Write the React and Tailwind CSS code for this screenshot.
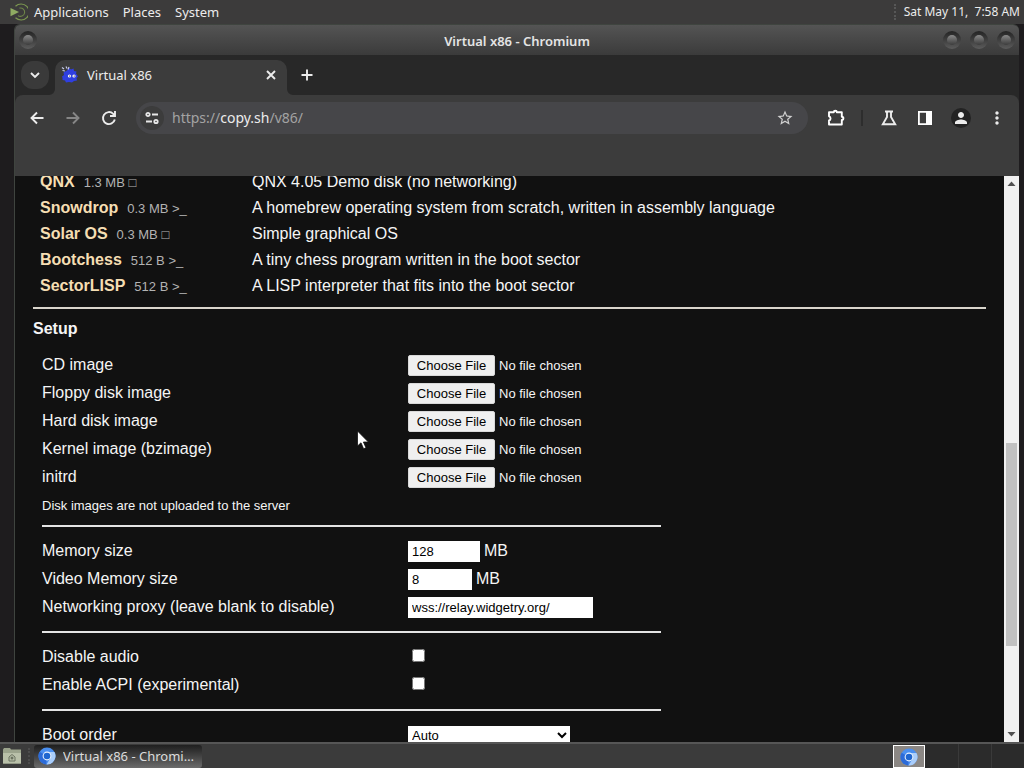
import React from "react";
import { MdMoreVert, MdPerson, MdStarBorder } from "react-icons/md";

const systems = [
  { name: "QNX", size: "1.3 MB", mode: "gui", text: "QNX 4.05 Demo disk (no networking)" },
  {
    name: "Snowdrop",
    size: "0.3 MB",
    mode: "text",
    text: "A homebrew operating system from scratch, written in assembly language",
  },
  { name: "Solar OS", size: "0.3 MB", mode: "gui", text: "Simple graphical OS" },
  { name: "Bootchess", size: "512 B", mode: "text", text: "A tiny chess program written in the boot sector" },
  { name: "SectorLISP", size: "512 B", mode: "text", text: "A LISP interpreter that fits into the boot sector" },
];

const images = [
  { id: "cd", label: "CD image" },
  { id: "floppy", label: "Floppy disk image" },
  { id: "hd", label: "Hard disk image" },
  { id: "kernel", label: "Kernel image (bzimage)" },
  { id: "initrd", label: "initrd" },
];

// Stroked 18px toolbar icons
const icons = {
  back: "M15.500 9H4M9 3.500 3.500 9 9 14.500",
  forward: "M2.500 9H14M9 3.500 14.500 9 9 14.500",
  reload: "M14.800 10.500A6 6 0 1 1 13.200 4.800L14.800 6.500M15 2v5h-5",
  chevron: "M5 7l4 4 4-4",
  close: "M5 5l8 8M13 5l-8 8",
  add: "M9 3.500v11M3.500 9h11",
  flask: "M5 2.500h8M7 2.500v5.500L2.800 15.200h12.400L11 8V2.500",
};

function Icon({ name }) {
  return (
    <svg viewBox="0 0 18 18" className="h-[18px] w-[18px]" fill="none" stroke="currentColor" strokeWidth="1.900">
      <path d={icons[name]} />
    </svg>
  );
}

function MateLogo() {
  return (
    <svg viewBox="0 0 20 20" className="h-5 w-5" fill="none">
      <path d="M2.500 6 11 10l-8.500 4.200Z" fill="#8fab62" />
      <path d="M7.500 4.300A8 8 0 1 1 7.500 15.700" stroke="#7c9850" strokeWidth="1.200" />
      <path d="M11.500 6.100a4.200 4.200 0 1 1-1.500 7.500" stroke="#6d8548" strokeWidth="1.100" />
    </svg>
  );
}

function ChromiumLogo() {
  return (
    <svg viewBox="0 0 18 18" className="h-[18px] w-[18px] shrink-0">
      <circle cx="9" cy="9" r="8.500" fill="#4a8ff0" />
      <path d="M9 9 1.600 4.700A8.500 8.500 0 0 0 8.200 17.500Z" fill="#2c6bd8" />
      <path d="M9 5h7.500A8.500 8.500 0 0 1 8.500 17.500L12.500 11Z" fill="#a9cdfb" />
      <circle cx="9" cy="9" r="4.400" fill="#e8f1fd" />
      <circle cx="9" cy="9" r="3.300" fill="#1f66d0" />
    </svg>
  );
}

function FolderIcon() {
  return (
    <svg viewBox="0 0 20 20" className="h-5 w-5">
      <path d="M1 3.500 2 2h6l1 1.500h10V17.500H1Z" fill="#9ba38c" />
      <path d="M1 7h18v10.500H1Z" fill="#b9c0a9" />
      <path d="M7 15v-4l3-2.500 3 2.500v4Z" fill="none" stroke="#6b7260" />
      <circle cx="10" cy="12" r="1.500" fill="#6b7260" />
    </svg>
  );
}

function Favicon() {
  return (
    <svg viewBox="0 0 18 18" className="h-[18px] w-[18px]">
      <path
        d="M2.500 6.500 6 4.500 8 2l2 1.500 2.500-1 .5 2.500 2.500.5-.5 2 2 3-1.500 1.500.5 2.500-3 .5-2 1.500-3-.5-3 .5-1-2-2.500-.5V12L1 10.500 3 9Z"
        fill="#2f3fe0"
      />
      <path d="m1 1.500 2 1.500M5 .5l1 2M1.500 4.500l2.500.5M8 1 7 3.500" stroke="#c3c8e8" strokeWidth="1.200" />
      <circle cx="8.500" cy="10" r="1.600" fill="#fff" />
      <circle cx="13" cy="10" r="1.600" fill="#fff" />
      <circle cx="8.700" cy="10" r=".6" fill="#111" />
      <circle cx="13.200" cy="10" r=".6" fill="#111" />
    </svg>
  );
}

function SiteInfoIcon() {
  return (
    <svg viewBox="0 0 16 16" className="h-4 w-4" fill="none" stroke="#e8e8e8" strokeWidth="1.800">
      <circle cx="4" cy="4.500" r="1.700" />
      <path d="M8 4.500h6M2 11.500h6" />
      <circle cx="12" cy="11.500" r="1.700" />
    </svg>
  );
}

function PuzzleIcon() {
  return (
    <svg viewBox="0 0 20 20" className="h-5 w-5" fill="none" stroke="#fff" strokeWidth="1.900" strokeLinejoin="round">
      <path d="M3 4.300h4.800a1.500 1.500 0 0 1 3 0h5v4.400a1.500 1.500 0 0 1 0 3.200v4.600H3v-4a2.200 2.200 0 0 0 0-4.200Z" />
    </svg>
  );
}

function SidePanelIcon() {
  return (
    <svg viewBox="0 0 16 16" className="h-4 w-4">
      <path d="M1.900 1.900h12.200v12.200H1.900Z" fill="none" stroke="#fff" strokeWidth="1.800" />
      <path d="M9 1h6v14H9Z" fill="#fff" />
    </svg>
  );
}

// Curved foot where a tab meets the toolbar
function TabFoot({ flip }) {
  return (
    <svg viewBox="0 0 6 6" className={flip ? "h-1.5 w-1.5 -scale-x-100" : "h-1.5 w-1.5"}>
      <path d="M6 0v6H0a6 6 0 0 0 6-6Z" fill="#3c3c3c" />
    </svg>
  );
}

function WindowButton({ label }) {
  return (
    <button
      aria-label={label}
      className="flex h-[18px] w-[18px] items-center justify-center rounded-full bg-gradient-to-b from-[#242424] to-[#5c5c5c]"
    >
      <span className="h-[10px] w-[10px] rounded-full bg-gradient-to-b from-[#8a8a8a] to-[#3c3c3c]" />
    </button>
  );
}

function Row({ id, label, children }) {
  return (
    <div className="flex h-7 items-center">
      <label htmlFor={id} className="w-[366px] shrink-0">
        {label}
      </label>
      {children}
    </div>
  );
}

function Divider() {
  return <hr className="my-2.5 border-t-2 border-[#e4e4e4]" />;
}

function TopPanel() {
  return (
    <header className="flex h-6 shrink-0 items-center justify-between bg-[#3c3b3b] pl-2 pr-1">
      <nav className="flex items-center">
        <MateLogo />
        <button className="ml-1.5">Applications</button>
        <button className="ml-3.5">Places</button>
        <button className="ml-3.5">System</button>
      </nav>
      <div className="flex items-center gap-2">
        <span className="h-4 border-l-2 border-dotted border-[#575757]" />
        <span className="whitespace-pre text-xs">Sat May 11,  7:58 AM</span>
      </div>
    </header>
  );
}

function TitleBar() {
  return (
    <div className="flex h-[30px] shrink-0 items-center bg-gradient-to-b from-[#545454] to-[#3b3b3b] px-1">
      <div className="flex-1">
        <WindowButton label="Window menu" />
      </div>
      <h1 className="pt-0.5 font-semibold text-[#e4e4e4]">Virtual x86 - Chromium</h1>
      <div className="flex flex-1 justify-end gap-[9px]">
        <WindowButton label="Minimize" />
        <WindowButton label="Maximize" />
        <WindowButton label="Close" />
      </div>
    </div>
  );
}

function TabStrip() {
  return (
    <div className="flex h-10 shrink-0 items-end pl-1.5">
      <button
        aria-label="Search tabs"
        className="mb-1.5 flex h-7 w-7 items-center justify-center rounded-xl bg-[#3a3a3a]"
      >
        <Icon name="chevron" />
      </button>
      <TabFoot />
      <div className="flex h-[35px] w-[232px] items-center rounded-t-[10px] bg-[#3c3c3c] pb-1.5 pl-1.5 pr-[7px]">
        <Favicon />
        <span className="ml-2 flex-1">Virtual x86</span>
        <button aria-label="Close tab">
          <Icon name="close" />
        </button>
      </div>
      <TabFoot flip />
      <button aria-label="New tab" className="mb-[11px] ml-[5px]">
        <Icon name="add" />
      </button>
    </div>
  );
}

function Toolbar() {
  return (
    <div className="h-[81px] shrink-0 rounded-t-lg bg-[#3c3c3c] pt-[7px]">
      <div className="flex items-center pl-[13px] pr-3">
        <button aria-label="Back">
          <Icon name="back" />
        </button>
        <button aria-label="Forward" className="ml-[18px] text-[#868686]">
          <Icon name="forward" />
        </button>
        <button aria-label="Reload" className="ml-[18px]">
          <Icon name="reload" />
        </button>
        <div className="ml-[18px] flex h-8 flex-1 items-center rounded-full bg-[#464649] pl-1 pr-3.5">
          <button
            aria-label="Site information"
            className="flex h-6 w-6 items-center justify-center rounded-full bg-[#3c3c3c]"
          >
            <SiteInfoIcon />
          </button>
          <span className="ml-2 flex-1 text-sm text-[#a3a3a3]">
            https://<span className="text-[#ececec]">copy.sh</span>/v86/
          </span>
          <button aria-label="Bookmark this tab" className="text-[#d0d0d0]">
            <MdStarBorder size={18} />
          </button>
        </div>
        <button aria-label="Extensions" className="ml-[18px]">
          <PuzzleIcon />
        </button>
        <span className="ml-[15px] h-4 w-0.5 bg-[#2d2d2d]" />
        <button aria-label="Experiments" className="ml-[17px]">
          <Icon name="flask" />
        </button>
        <button aria-label="Side panel" className="ml-[19px]">
          <SidePanelIcon />
        </button>
        <button aria-label="Profile" className="ml-[18px] rounded-full bg-[#232323] p-px">
          <MdPerson size={18} />
        </button>
        <button aria-label="Menu" className="ml-4">
          <MdMoreVert size={20} />
        </button>
      </div>
    </div>
  );
}

function SystemList() {
  return (
    <table>
      <tbody>
        {systems.map((system) => (
          <tr key={system.name} className="h-[26px]">
            <td className="w-[219px] pl-[7px]">
              <a href="#" className="font-bold text-[#f5deb3]">
                {system.name}
              </a>
              <span className="ml-[9px] text-[13px] text-[#b3b3b3]">
                {system.size} {system.mode === "text" ? ">_" : "□"}
              </span>
            </td>
            <td>{system.text}</td>
          </tr>
        ))}
      </tbody>
    </table>
  );
}

function Setup() {
  return (
    <section>
      <h2 className="mt-2.5 font-bold">Setup</h2>
      <form className="ml-[9px] mt-3 max-w-[619px]">
        {images.map((image) => (
          <Row key={image.id} id={image.id} label={image.label}>
            <input
              id={image.id}
              type="file"
              className="text-[13px] leading-[15px] file:mr-1 file:h-[21px] file:w-[87px] file:rounded-[2px] file:border file:border-solid file:border-[#d8d8d8] file:bg-[#efefef] file:text-center file:text-black"
            />
          </Row>
        ))}
        <p className="flex h-6 items-center pt-1.5 text-[13px]">Disk images are not uploaded to the server</p>
        <Divider />
        <Row id="memory" label="Memory size">
          <input
            id="memory"
            type="number"
            defaultValue="128"
            className="h-[21px] w-[72px] bg-white pl-1 text-[13px] text-black"
          />
          <span className="ml-1">MB</span>
        </Row>
        <Row id="vga" label="Video Memory size">
          <input
            id="vga"
            type="number"
            defaultValue="8"
            className="h-[21px] w-16 bg-white pl-1 text-[13px] text-black"
          />
          <span className="ml-1">MB</span>
        </Row>
        <Row id="proxy" label="Networking proxy (leave blank to disable)">
          <input
            id="proxy"
            type="text"
            defaultValue="wss://relay.widgetry.org/"
            className="h-[21px] w-[185px] bg-white pl-1 text-[13px] text-black"
          />
        </Row>
        <Divider />
        <Row id="audio" label="Disable audio">
          <input id="audio" type="checkbox" className="mb-1 ml-1 h-[13px] w-[13px]" />
        </Row>
        <Row id="acpi" label="Enable ACPI (experimental)">
          <input id="acpi" type="checkbox" className="mb-1 ml-1 h-[13px] w-[13px]" />
        </Row>
        <Divider />
        <Row id="boot" label="Boot order">
          <select id="boot" className="h-[19px] w-[162px] bg-white text-[13px] text-black">
            <option>Auto</option>
          </select>
        </Row>
      </form>
    </section>
  );
}

function Scrollbar() {
  return (
    <div className="flex w-[15px] shrink-0 flex-col items-center bg-[#f1f1f1]">
      <svg viewBox="0 0 15 14" className="h-3.5 w-[15px]">
        <path d="M3.500 10 7.500 5.500 11.500 10Z" fill="#505050" />
      </svg>
      <div className="grow-[253]" />
      <div className="w-[11px] grow-[203] bg-[#c1c1c1]" />
      <div className="grow-[82]" />
      <svg viewBox="0 0 15 14" className="h-3.5 w-[15px]">
        <path d="M3.500 4 7.500 8.500 11.500 4Z" fill="#505050" />
      </svg>
    </div>
  );
}

function BottomPanel() {
  return (
    <footer className="flex h-[26px] shrink-0 items-center border-t-2 border-[#565656] bg-[#3b3b3b] pl-0.5">
      <button aria-label="Show desktop">
        <FolderIcon />
      </button>
      <span className="ml-1.5 h-4 border-l-2 border-dotted border-[#4c4c4c]" />
      <button className="ml-1 flex h-[23px] w-[168px] items-center rounded-[3px] bg-gradient-to-b from-[#1f1f1f] to-[#6c6c6c] pl-1 text-[#dcdcdc]">
        <ChromiumLogo />
        <span className="ml-[7px] truncate">Virtual x86 - Chromi…</span>
      </button>
      <div className="ml-auto flex h-full items-end bg-[#2b2b2b]">
        <button
          aria-label="Workspace 1"
          className="flex h-[23px] w-8 items-center justify-center border border-white bg-[#8b8784]"
        >
          <ChromiumLogo />
        </button>
        <button aria-label="Workspace 2" className="h-full w-[34px] border-r border-[#3a3a3a]" />
        <button aria-label="Workspace 3" className="h-full w-[33px] border-r border-[#3a3a3a]" />
        <button aria-label="Workspace 4" className="h-full w-8" />
      </div>
    </footer>
  );
}

function App() {
  return (
    <div className="flex h-screen flex-col overflow-hidden bg-[#1e1c1e] font-['Noto_Sans',sans-serif] text-[13px] leading-4 text-[#ececec]">
      <TopPanel />
      <main className="ml-3.5 mr-[5px] flex min-h-0 flex-1 flex-col overflow-hidden rounded-t-md border-l border-t border-[#3f443f] bg-[#111]">
        <TitleBar />
        <div className="shrink-0 bg-[#282828]">
          <TabStrip />
          <Toolbar />
        </div>
        <div className="relative flex min-h-0 flex-1">
          <div className="flex-1 overflow-hidden px-[18px] font-['Liberation_Sans',Arial,sans-serif] text-base leading-5 text-[#f5f5f5]">
            <div className="-mt-[7px]">
              <SystemList />
              <hr className="mt-2 border-t-2 border-[#d9d5cc]" />
              <Setup />
            </div>
          </div>
          <Scrollbar />
          {/* Mouse pointer */}
          <svg viewBox="0 0 12 20" className="absolute left-[342px] top-[254px] h-5 w-3">
            <path d="M.5 1v15l3.500-3.200 2.600 6 2.400-1-2.600-5.800h5Z" fill="#fff" stroke="#111" strokeWidth=".8" />
          </svg>
        </div>
      </main>
      <BottomPanel />
    </div>
  );
}

export default App;
